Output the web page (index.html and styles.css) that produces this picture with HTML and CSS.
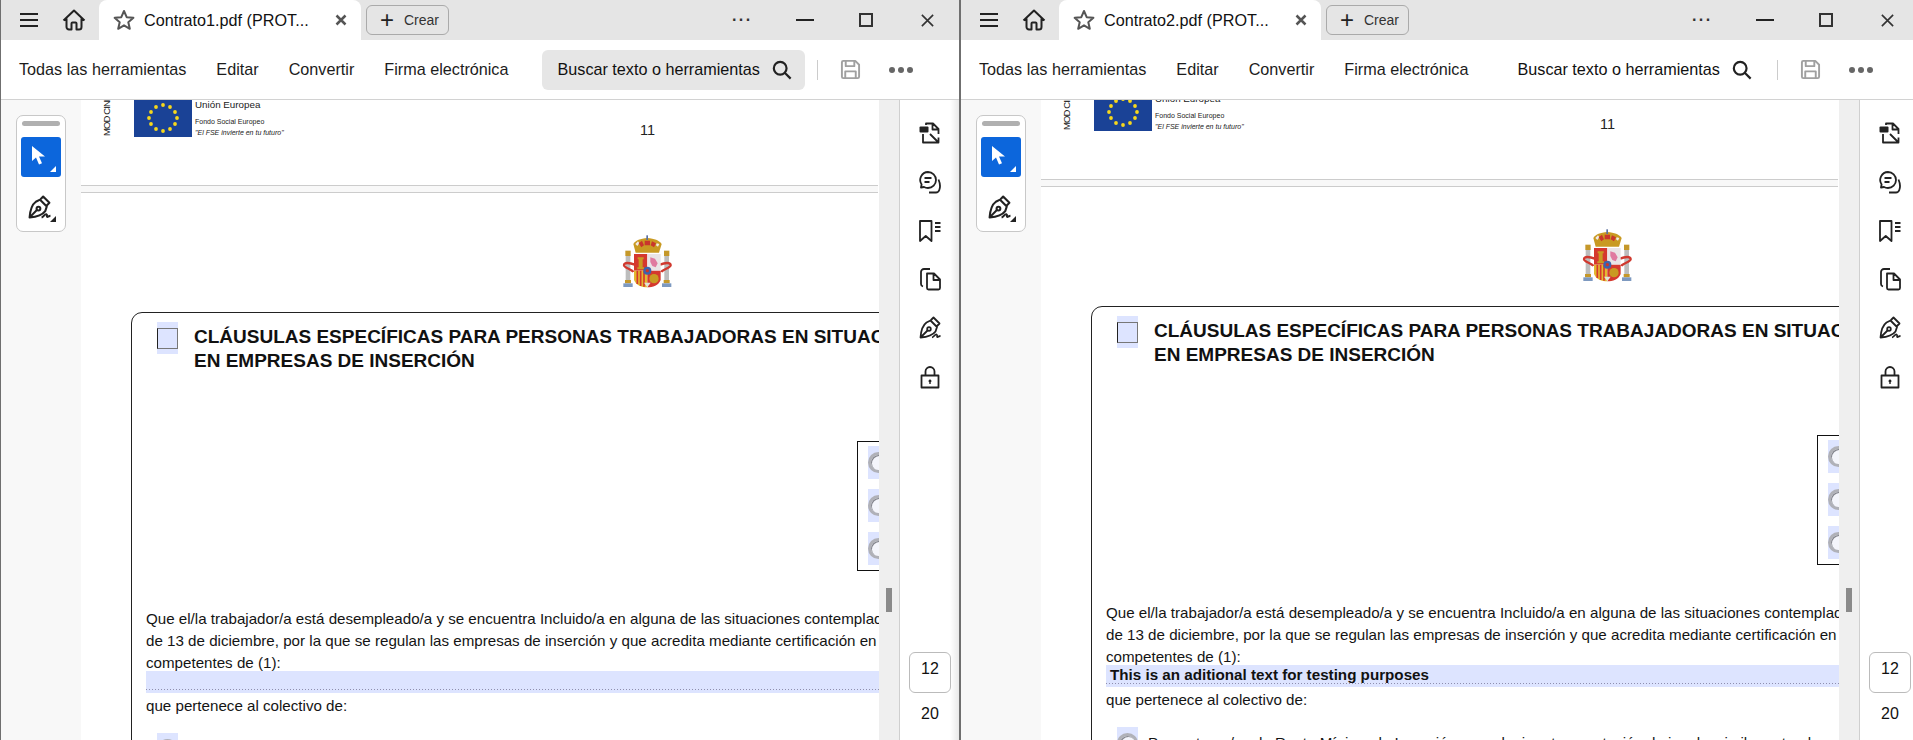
FILE: index.html
```html
<!DOCTYPE html>
<html>
<head>
	<meta charset="utf-8">
	<title>Contrato1.pdf / Contrato2.pdf</title>
	<link rel="stylesheet" href="styles.css">
</head>
<body>
	<svg class="defs" width="0" height="0">
		<symbol id="i-menu" viewBox="0 0 18 14"><path d="M0 1H18M0 7H18M0 13H18"/></symbol>
		<symbol id="i-home" viewBox="0 0 24 24"><path d="M1.500 12.500 12 2.500l10.500 10M4.500 10.500V19a2.500 2.500 0 0 0 2.500 2.500h2.500V15.500a1 1 0 0 1 1-1h3a1 1 0 0 1 1 1v6H17a2.500 2.500 0 0 0 2.500-2.500V10.500"/></symbol>
		<symbol id="i-star" viewBox="0 0 22 22"><path d="m11 2 2.700 6.200 6.700.6-5.100 4.400 1.500 6.600L11 16.300l-5.800 3.500 1.500-6.600-5.100-4.400 6.700-.6z"/></symbol>
		<symbol id="i-x" viewBox="0 0 12 12"><path d="M1.500 1.500l9 9M10.500 1.500l-9 9"/></symbol>
		<symbol id="i-search" viewBox="0 0 22 22"><circle cx="9" cy="9" r="7"/><path d="m14 14 6.500 6.500"/></symbol>
		<symbol id="i-save" viewBox="0 0 22 22"><path d="M2 3.500A1.500 1.500 0 0 1 3.500 2H16l4 4v12.500a1.500 1.500 0 0 1-1.500 1.500h-15A1.500 1.500 0 0 1 2 18.500zM6 2v5.500h9V2M5.500 20v-7h11v7"/></symbol>
		<symbol id="i-export" viewBox="0 0 24 24"><path d="M8 4V2.500h7l5.500 5.500v5M14.500 2.500V8.500h6M5 13v8.500h10.500M12 13l7.500 7.500M20.500 16.500v5h-5"/><rect class="solid" x="1.500" y="5.500" width="9" height="6" rx="1"/></symbol>
		<symbol id="i-comment" viewBox="0 0 24 24"><path d="M10 2a8 8 0 0 1 0 16c-1.500 0-3-.4-4-1l-3 .5.600-3A8 8 0 0 1 10 2zM6.500 8h7M6.500 12h5M20.500 9.500c1.500 3.500 2 7.500.8 10.500-.6 1.700-1.800 2.500-3.300 2.500H11"/></symbol>
		<symbol id="i-marks" viewBox="0 0 24 24"><path d="M2 2h11.500v20l-5.750-5L2 22zM17 4h5.500M17 8h5.500M17 12h5.500"/></symbol>
		<symbol id="i-copy" viewBox="0 0 24 24"><path d="M9 6.500h7l6 6V21a1.500 1.500 0 0 1-1.500 1.500H10.500A1.500 1.500 0 0 1 9 21zM15.500 6.500V13H22M5 19.500C3.500 19 3 18 3 17V5a3 3 0 0 1 3-3h6"/></symbol>
		<symbol id="i-pen" viewBox="0 0 24 24"><path d="M12.500 4.500 19 11l-1.500 4.500C15 19 9 21 2.500 21.500 3 15 5 9 8.500 6.500zM13 4l2.500-2.500L21.500 7.500 19 10M3 21l6.500-6.500M14 21.500c2-.5 3-3.500 4.500-3s0 2.500 1 2.500 1.500-1 3-1"/><circle cx="11" cy="13" r="1.800"/></symbol>
		<symbol id="i-lock" viewBox="0 0 24 24"><path d="M3.500 10.500h17v12h-17zM7.500 10.500V6.500a4.500 4.500 0 0 1 9 0v4"/><path class="solid" d="M12 14.500a1.500 1.500 0 0 1 .7 2.800V19h-1.400v-1.700a1.500 1.500 0 0 1 .7-2.800z"/></symbol>
		<symbol id="i-flag" viewBox="0 0 58 37">
			<rect width="58" height="37" fill="#1a4296"/>
			<g fill="#f7d81c">
				<circle cx="29" cy="5" r="1.900"/><circle cx="36" cy="7" r="1.900"/><circle cx="41" cy="12" r="1.900"/><circle cx="43" cy="18" r="1.900"/><circle cx="41" cy="24" r="1.900"/><circle cx="36" cy="29" r="1.900"/><circle cx="29" cy="31" r="1.900"/><circle cx="22" cy="29" r="1.900"/><circle cx="17" cy="24" r="1.900"/><circle cx="15" cy="18" r="1.900"/><circle cx="17" cy="12" r="1.900"/><circle cx="22" cy="7" r="1.900"/>
			</g>
		</symbol>
		<symbol id="i-crest" viewBox="0 0 360 240">
			<path fill="#c99a22" d="M130 72c8-12 20-16 42-18 22 2 34 6 43 18l-8 26h-70z"/>
			<path fill="#f0ece8" d="M136 72l8-8 4 6-6 8zM200 70l8 2-4 8-6-4z"/>
			<path fill="#c9362c" d="M146 70l10-8 6 14-8 6zM164 62h16v14h-16zM186 64l12 6-6 12-10-6z"/>
			<rect x="169" y="46" width="5" height="14" fill="#5a6fa0"/>
			<rect x="106" y="92" width="16" height="16" fill="#c5982a"/>
			<rect x="222" y="92" width="16" height="16" fill="#c5982a"/>
			<rect x="107" y="108" width="14" height="72" fill="#bdbdbd"/>
			<rect x="223" y="108" width="14" height="72" fill="#bdbdbd"/>
			<rect x="105" y="180" width="18" height="10" fill="#c5982a"/>
			<rect x="221" y="180" width="18" height="10" fill="#c5982a"/>
			<rect x="100" y="190" width="28" height="11" fill="#7d99c0"/>
			<rect x="216" y="190" width="28" height="11" fill="#7d99c0"/>
			<path fill="none" stroke="#d0392f" stroke-width="7" d="M134 134c-14-6-32-8-32 2 0 8 22 10 28 20M210 134c14-6 32-8 32 2 0 8-22 10-28 20"/>
			<rect x="132" y="102" width="40" height="50" fill="#d5382e"/>
			<rect x="172" y="102" width="40" height="50" fill="#e9e4e6"/>
			<path fill="#c99a22" d="M143 112h18v6h-3v24h4v6h-20v-6h4v-24h-3z"/>
			<path fill="#e07aa0" d="M181 112l14 4 8 14-6 12-10-4-6-12z"/>
			<path fill="#e3b92f" d="M132 152h40v50c-16 0-34-6-40-22z"/>
			<path stroke="#d5382e" stroke-width="5" d="M142 152v40M152 152v46M162 152v48"/>
			<path fill="#d5382e" d="M172 152h40v28c-6 16-24 22-40 22z"/>
			<circle cx="192" cy="176" r="14" fill="#c99a22"/>
			<circle cx="172" cy="152" r="12" fill="#3c63ad"/>
			<circle cx="172" cy="152" r="5" fill="#c9362c"/>
			<path fill="#dfe3d8" d="M162 188h20l-10 14z"/>
		</symbol>
	</svg>

	<div class="desktop">
		<section class="window">
			<header class="titlebar">
				<svg class="ico-menu stroke"><use href="#i-menu"/></svg>
				<svg class="ico-home stroke"><use href="#i-home"/></svg>
				<div class="tab">
					<svg class="ico-star stroke"><use href="#i-star"/></svg>
					<span class="tab-name">Contrato1.pdf (PROT...</span>
					<svg class="ico-tabx stroke"><use href="#i-x"/></svg>
				</div>
				<button class="btn-new"><span class="plus">+</span>Crear</button>
				<div class="controls">
					<span class="ctl-dots">···</span>
					<span class="ctl-min"></span>
					<span class="ctl-max"></span>
					<svg class="ico-winx stroke"><use href="#i-x"/></svg>
				</div>
			</header>
			<nav class="toolbar">
				<a>Todas las herramientas</a>
				<a>Editar</a>
				<a>Convertir</a>
				<a>Firma electrónica</a>
				<div class="find find-on">Buscar texto o herramientas<svg class="ico-search stroke"><use href="#i-search"/></svg></div>
				<span class="tool-sep"></span>
				<svg class="ico-save stroke"><use href="#i-save"/></svg>
				<span class="tool-dots"><i></i><i></i><i></i></span>
			</nav>
			<div class="body">
				<aside class="rail-left">
					<div class="quick">
						<span class="grip"></span>
						<span class="quick-btn on">
							<svg class="ico-cursor" viewBox="0 0 13 19"><path d="M0 0v15l4-3.500L7 18.500l3-1.300-3-6.700h6z"/></svg>
						</span>
						<span class="quick-btn">
							<svg class="ico-quickpen stroke"><use href="#i-pen"/></svg>
						</span>
					</div>
				</aside>
				<main class="doc">
					<div class="sheet">
						<div class="page-head">
							<span class="mod">MOD CINE</span>
							<svg class="eu-flag"><use href="#i-flag"/></svg>
							<div class="eu-text">
								<p class="eu-name">Unión Europea</p>
								<p class="eu-fund">Fondo Social Europeo</p>
								<p class="eu-motto">"El FSE invierte en tu futuro"</p>
							</div>
							<span class="page-num">11</span>
						</div>
						<div class="page-gap"></div>
						<svg class="crest"><use href="#i-crest"/></svg>
						<div class="clause">
							<div class="clause-head">
								<span class="check"><span></span></span>
								<h2>CLÁUSULAS ESPECÍFICAS PARA PERSONAS TRABAJADORAS EN SITUACIÓN DE EXCLUSIÓN SOCIAL<br>EN EMPRESAS DE INSERCIÓN</h2>
							</div>
							<div class="options">
								<span class="radio-cell"><span class="radio"></span></span>
								<span class="radio-cell"><span class="radio"></span></span>
								<span class="radio-cell"><span class="radio"></span></span>
							</div>
							<p class="line first">Que el/la trabajador/a está desempleado/a y se encuentra Incluido/a en alguna de las situaciones contempladas en el artículo 2 de la Ley 44/2007,</p>
							<p class="line">de 13 de diciembre, por la que se regulan las empresas de inserción y que acredita mediante certificación en vigor de los servicios sociales</p>
							<p class="line">competentes de (1):</p>
							<div class="field"></div>
							<p class="line after">que pertenece al colectivo de:</p>
							<div class="choice">
								<span class="radio-cell"><span class="radio"></span></span>
								<span class="line">Perceptoras/es de Renta Mínima de Inserción, o cualquier otra prestación de igual o similar naturaleza</span>
							</div>
						</div>
					</div>
				</main>
				<div class="track"><span class="thumb"></span></div>
				<aside class="rail-right">
					<svg class="tool-ico stroke"><use href="#i-export"/></svg>
					<svg class="tool-ico stroke"><use href="#i-comment"/></svg>
					<svg class="tool-ico stroke"><use href="#i-marks"/></svg>
					<svg class="tool-ico stroke"><use href="#i-copy"/></svg>
					<svg class="tool-ico stroke"><use href="#i-pen"/></svg>
					<svg class="tool-ico stroke"><use href="#i-lock"/></svg>
					<div class="pager"><span class="pager-now">12</span><span class="pager-all">20</span></div>
				</aside>
			</div>
		</section>

		<section class="window second">
			<header class="titlebar">
				<svg class="ico-menu stroke"><use href="#i-menu"/></svg>
				<svg class="ico-home stroke"><use href="#i-home"/></svg>
				<div class="tab">
					<svg class="ico-star stroke"><use href="#i-star"/></svg>
					<span class="tab-name">Contrato2.pdf (PROT...</span>
					<svg class="ico-tabx stroke"><use href="#i-x"/></svg>
				</div>
				<button class="btn-new"><span class="plus">+</span>Crear</button>
				<div class="controls">
					<span class="ctl-dots">···</span>
					<span class="ctl-min"></span>
					<span class="ctl-max"></span>
					<svg class="ico-winx stroke"><use href="#i-x"/></svg>
				</div>
			</header>
			<nav class="toolbar">
				<a>Todas las herramientas</a>
				<a>Editar</a>
				<a>Convertir</a>
				<a>Firma electrónica</a>
				<div class="find">Buscar texto o herramientas<svg class="ico-search stroke"><use href="#i-search"/></svg></div>
				<span class="tool-sep"></span>
				<svg class="ico-save stroke"><use href="#i-save"/></svg>
				<span class="tool-dots"><i></i><i></i><i></i></span>
			</nav>
			<div class="body">
				<aside class="rail-left">
					<div class="quick">
						<span class="grip"></span>
						<span class="quick-btn on">
							<svg class="ico-cursor" viewBox="0 0 13 19"><path d="M0 0v15l4-3.500L7 18.500l3-1.300-3-6.700h6z"/></svg>
						</span>
						<span class="quick-btn">
							<svg class="ico-quickpen stroke"><use href="#i-pen"/></svg>
						</span>
					</div>
				</aside>
				<main class="doc">
					<div class="sheet">
						<div class="page-head">
							<span class="mod">MOD CINE</span>
							<svg class="eu-flag"><use href="#i-flag"/></svg>
							<div class="eu-text">
								<p class="eu-name">Unión Europea</p>
								<p class="eu-fund">Fondo Social Europeo</p>
								<p class="eu-motto">"El FSE invierte en tu futuro"</p>
							</div>
							<span class="page-num">11</span>
						</div>
						<div class="page-gap"></div>
						<svg class="crest"><use href="#i-crest"/></svg>
						<div class="clause">
							<div class="clause-head">
								<span class="check"><span></span></span>
								<h2>CLÁUSULAS ESPECÍFICAS PARA PERSONAS TRABAJADORAS EN SITUACIÓN DE EXCLUSIÓN SOCIAL<br>EN EMPRESAS DE INSERCIÓN</h2>
							</div>
							<div class="options">
								<span class="radio-cell"><span class="radio"></span></span>
								<span class="radio-cell"><span class="radio"></span></span>
								<span class="radio-cell"><span class="radio"></span></span>
							</div>
							<p class="line first">Que el/la trabajador/a está desempleado/a y se encuentra Incluido/a en alguna de las situaciones contempladas en el artículo 2 de la Ley 44/2007,</p>
							<p class="line">de 13 de diciembre, por la que se regulan las empresas de inserción y que acredita mediante certificación en vigor de los servicios sociales</p>
							<p class="line">competentes de (1):</p>
							<div class="field">This is an aditional text for testing purposes</div>
							<p class="line after">que pertenece al colectivo de:</p>
							<div class="choice">
								<span class="radio-cell"><span class="radio"></span></span>
								<span class="line">Perceptoras/es de Renta Mínima de Inserción, o cualquier otra prestación de igual o similar naturaleza</span>
							</div>
						</div>
					</div>
				</main>
				<div class="track"><span class="thumb"></span></div>
				<aside class="rail-right">
					<svg class="tool-ico stroke"><use href="#i-export"/></svg>
					<svg class="tool-ico stroke"><use href="#i-comment"/></svg>
					<svg class="tool-ico stroke"><use href="#i-marks"/></svg>
					<svg class="tool-ico stroke"><use href="#i-copy"/></svg>
					<svg class="tool-ico stroke"><use href="#i-pen"/></svg>
					<svg class="tool-ico stroke"><use href="#i-lock"/></svg>
					<div class="pager"><span class="pager-now">12</span><span class="pager-all">20</span></div>
				</aside>
			</div>
		</section>
	</div>
</body>
</html>
```
FILE: styles.css
```css
*{
	margin: 0;
	padding: 0;
	box-sizing: border-box;
}
html, body{
	height: 740px;
	overflow: hidden;
	background: #fff;
	font-family: "Liberation Sans", Arial, sans-serif;
	color: #1a1a1a;
}
.defs{
	position: absolute;
}
.stroke{
	fill: none;
	stroke: #222;
	stroke-width: 2;
	stroke-linejoin: round;
}
.solid{
	fill: #222;
	stroke: none;
}
.desktop{
	display: flex;
	width: 1913px;
	height: 740px;
}
.window{
	width: 960px;
	flex: none;
	border-left: 1px solid #6f6f6f;
	border-right: 1px solid #6f6f6f;
	display: flex;
	flex-direction: column;
	overflow: hidden;
}
.window.second{
	width: 953px;
	border-right: 0;
}

/* title bar */
.titlebar{
	height: 40px;
	flex: none;
	display: flex;
	align-items: center;
	background: #e5e5e5;
}
.ico-menu{
	width: 18px;
	height: 14px;
	margin-left: 19px;
}
.ico-home{
	width: 24px;
	height: 24px;
	margin-left: 24px;
}
.tab{
	width: 262px;
	height: 40px;
	margin-left: 13px;
	display: flex;
	align-items: center;
	background: #fff;
	border-radius: 8px 8px 0 0;
}
.ico-star{
	width: 22px;
	height: 22px;
	margin-left: 14px;
	stroke: #555;
}
.tab-name{
	width: 177px;
	margin-left: 9px;
	font-size: 16.200px;
	white-space: nowrap;
	color: #111;
}
.ico-tabx{
	width: 12px;
	height: 12px;
	margin-left: 14px;
	stroke: #555;
	stroke-width: 2.500;
}
.btn-new{
	width: 83px;
	height: 30px;
	margin-left: 5px;
	display: flex;
	align-items: center;
	background: #e5e5e5;
	border: 1px solid #aaa;
	border-radius: 6px;
	font-family: inherit;
	font-size: 14px;
	color: #333;
}
.plus{
	width: 18px;
	margin: 0 8px 0 11px;
	font-size: 24px;
	line-height: 24px;
	color: #222;
}
.controls{
	margin-left: 283px;
	display: flex;
	align-items: center;
}
.ctl-dots{
	width: 16px;
	font-size: 16px;
	font-weight: bold;
	line-height: 16px;
	letter-spacing: 1.500px;
	white-space: nowrap;
	color: #333;
}
.ctl-min{
	width: 18px;
	height: 2px;
	margin-left: 48px;
	background: #222;
}
.ctl-max{
	width: 14px;
	height: 14px;
	margin-left: 45px;
	border: 2px solid #333;
}
.ico-winx{
	width: 15px;
	height: 15px;
	margin-left: 47px;
	stroke: #333;
	stroke-width: 1.300;
}

/* tool bar */
.toolbar{
	height: 60px;
	flex: none;
	display: flex;
	align-items: center;
	padding-left: 18px;
	gap: 30px;
	background: #fff;
	border-bottom: 1px solid #d2d2d2;
	font-size: 16.200px;
	white-space: nowrap;
	color: #1c1c1c;
}
.find{
	width: 263px;
	height: 40px;
	margin-left: 4px;
	display: flex;
	align-items: center;
	justify-content: space-between;
	padding: 0 13px 0 15px;
	border-radius: 6px;
	color: #111;
}
.find-on{
	background: #e6e6e6;
}
.ico-search{
	width: 20px;
	height: 20px;
	flex: none;
	stroke-width: 2.400;
}
.tool-sep{
	width: 1px;
	height: 20px;
	margin-left: -18px;
	background: #ccc;
}
.ico-save{
	width: 21px;
	height: 21px;
	margin-left: -8px;
	stroke: #a0a0a0;
}
.tool-dots{
	display: flex;
	gap: 3px;
	margin-left: -2px;
}
.tool-dots i{
	width: 6px;
	height: 6px;
	border-radius: 50%;
	background: #666;
}

/* panes */
.body{
	flex: 1;
	min-height: 0;
	display: grid;
	grid-template-columns: 80px 798px 20px 1fr;
}
.rail-left{
	background: #f8f8f8;
	padding: 15px 0 0 15px;
}
.quick{
	width: 50px;
	height: 117px;
	padding: 5px 4px 0;
	background: #fff;
	border: 1px solid #c8c8c8;
	border-radius: 7px;
	display: flex;
	flex-direction: column;
}
.grip{
	height: 5px;
	flex: none;
	margin: 0 1px 11px;
	background: #b0b0b0;
	border-radius: 3px;
}
.quick-btn{
	position: relative;
	width: 40px;
	height: 40px;
	flex: none;
	margin-bottom: 5px;
	display: flex;
	align-items: center;
	justify-content: center;
	border-radius: 3px;
}
.quick-btn.on{
	background: #0c66dc;
}
.quick-btn::after{
	content: "";
	position: absolute;
	right: 5px;
	bottom: 0;
	border-left: 6px solid transparent;
	border-bottom: 6px solid #222;
}
.quick-btn.on::after{
	bottom: 5px;
	border-bottom-color: #fff;
}
.ico-cursor{
	width: 13px;
	height: 19px;
	margin: -3px 6px 0 0;
	fill: #fff;
}
.ico-quickpen{
	width: 25px;
	height: 25px;
	flex: none;
	margin: 10px 4px 0 0;
}
.doc{
	overflow: hidden;
	background: #fff;
}
.second .sheet{
	margin-top: -6px;
}
.sheet{
	width: 1150px;
}
.track{
	background: #efefef;
	padding: 488px 0 0 7px;
}
.thumb{
	display: block;
	width: 6px;
	height: 24px;
	background: #8a8a8a;
}
.rail-right{
	position: relative;
	display: flex;
	flex-direction: column;
	align-items: flex-start;
	gap: 24.800px;
	padding: 21px 0 0 18px;
	border-left: 1px solid #cfcfcf;
	background: linear-gradient(90deg, #fff 85%, #e9e9e9 100%);
}
.second .rail-right{
	background: #fff;
}
.tool-ico{
	width: 24px;
	height: 24px;
	flex: none;
	stroke-width: 1.800;
}
.pager{
	position: absolute;
	top: 552px;
	left: 9px;
	width: 42px;
	text-align: center;
	font-size: 16px;
	color: #111;
}
.pager-now{
	display: block;
	height: 41px;
	padding-top: 7px;
	border: 1px solid #bbb;
	border-radius: 6px;
	background: #fff;
}
.pager-all{
	display: block;
	margin-top: 12px;
}

/* pdf page */
.page-head{
	height: 85px;
	display: flex;
	align-items: flex-start;
	padding-left: 21px;
}
.mod{
	height: 36px;
	width: 9px;
	writing-mode: vertical-rl;
	transform: rotate(180deg);
	font-size: 9.500px;
	letter-spacing: -.9px;
	line-height: 9px;
	white-space: nowrap;
	overflow: hidden;
	color: #222;
}
.eu-flag{
	width: 58px;
	height: 37px;
	margin-left: 23px;
	flex: none;
}
.eu-text{
	width: 170px;
	margin-left: 3px;
	color: #222;
}
.eu-name{
	font-size: 9.800px;
	line-height: 10px;
	margin-bottom: 7px;
}
.eu-fund{
	font-size: 7px;
	line-height: 9px;
}
.eu-motto{
	margin-top: 2px;
	font-size: 7px;
	line-height: 9px;
	font-style: italic;
}
.page-num{
	margin: 22px 0 0 275px;
	font-size: 14.500px;
	line-height: 17px;
	color: #222;
}
.page-gap{
	height: 8px;
	background: #f8f8f8;
	border-top: 1px solid #ccc;
	border-bottom: 1px solid #ccc;
	width: 797px;
}
.crest{
	display: block;
	width: 120px;
	height: 80px;
	margin: 27px 0 12px 509px;
}
.clause{
	margin-left: 50px;
	width: 1090px;
	height: 460px;
	padding-left: 14px;
	border: 1.500px solid #222;
	border-radius: 11px;
}
.clause-head{
	display: flex;
	height: 118px;
	padding: 9px 0 0 11px;
}
.check{
	width: 21px;
	height: 32px;
	flex: none;
	display: flex;
	align-items: center;
	background: #dde4ff;
}
.check span{
	width: 21px;
	height: 21px;
	border: 1px solid #777;
	border-left-color: #222;
}
h2{
	margin: 3px 0 0 16px;
	font-size: 19px;
	line-height: 24px;
	white-space: nowrap;
	color: #111;
}
.options{
	width: 120px;
	height: 130px;
	margin: 10px 0 37px 711px;
	padding: 4px 0 0 10px;
	display: flex;
	flex-direction: column;
	gap: 10px;
	border: 1.500px solid #111;
}
.radio-cell{
	width: 21px;
	height: 33px;
	flex: none;
	display: flex;
	align-items: center;
	background: #dde4ff;
}
.radio{
	width: 21px;
	height: 21px;
	flex: none;
	border-radius: 50%;
	background: #f4f5fb;
	border: 3px solid #b0b1b8;
	box-shadow: inset 1px 1px 0 #85868e;
}
.line{
	font-size: 15.150px;
	line-height: 22px;
	white-space: nowrap;
	color: #141414;
}
.field{
	height: 22px;
	margin-top: -3px;
	padding-left: 4px;
	background-color: #dde4ff;
	background-image: repeating-linear-gradient(90deg, #8f8fae 0 1px, transparent 1px 3px);
	background-size: 100% 1px;
	background-position: 0 18px;
	background-repeat: no-repeat;
	font-size: 15.200px;
	font-weight: bold;
	line-height: 19px;
	white-space: nowrap;
	color: #111;
}
.after{
	margin-top: 2px;
}
.choice{
	display: flex;
	gap: 10px;
	margin: 16px 0 0 11px;
}
.choice .line{
	margin-top: 5px;
}
```
